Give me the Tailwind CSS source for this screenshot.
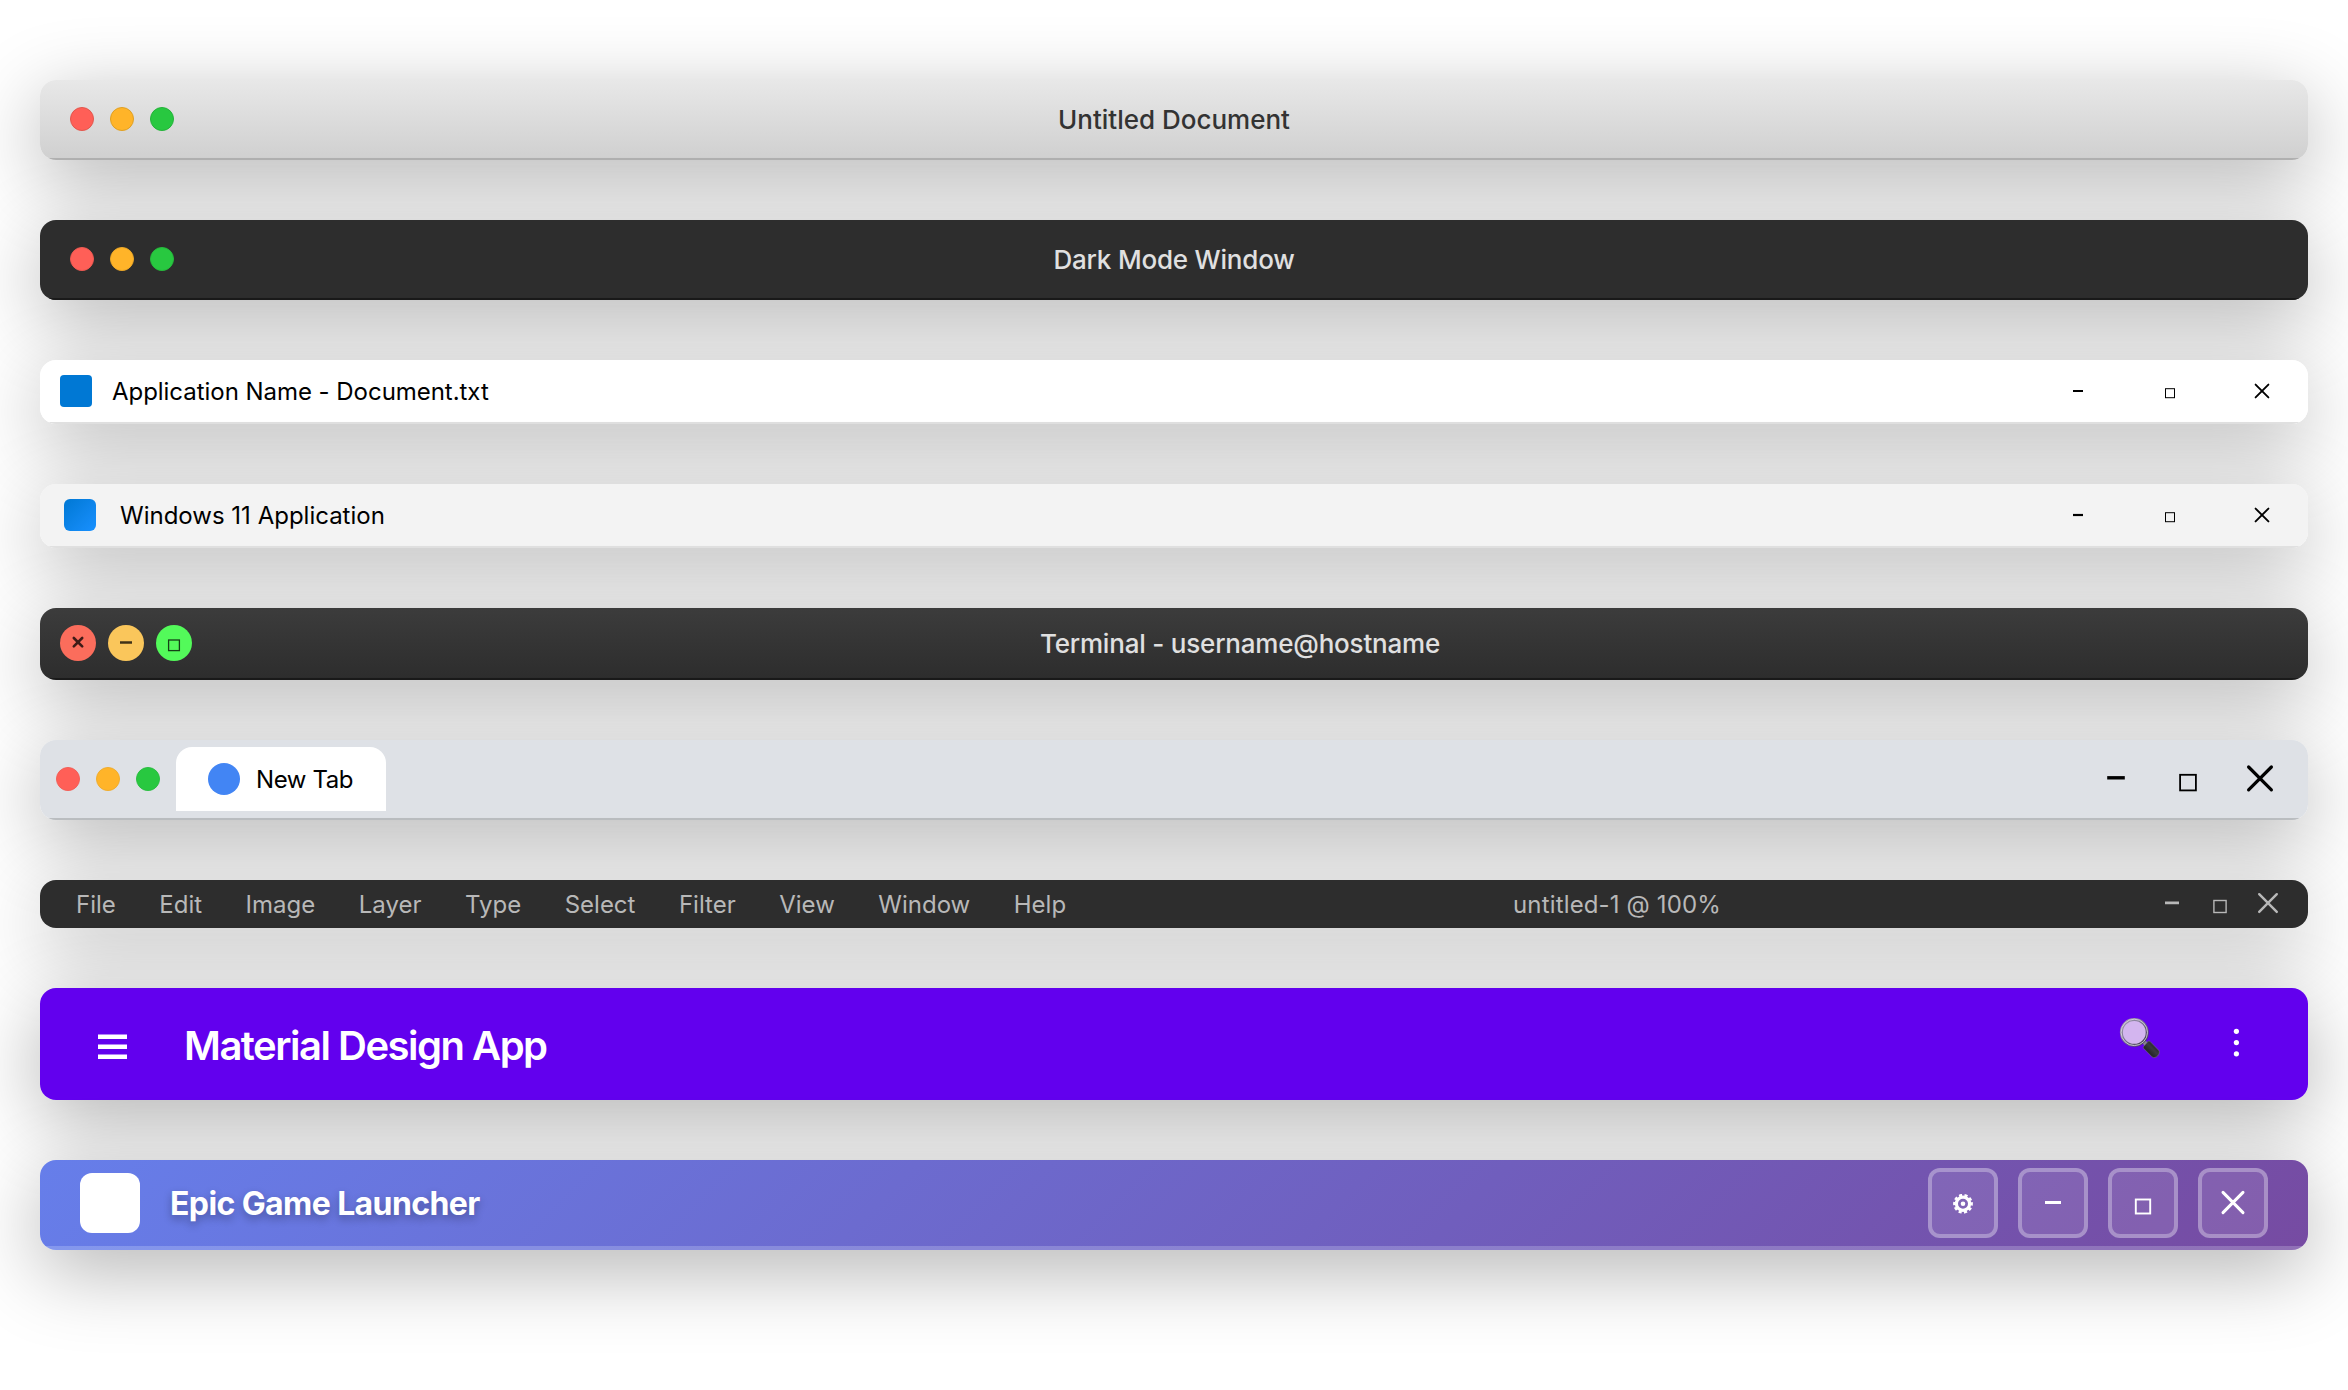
<!DOCTYPE html>
<html lang="en">
<head>
<meta charset="utf-8">
<title>Title bars</title>
<script src="https://cdn.jsdelivr.net/npm/@tailwindcss/browser@4"></script>
</head>
<body class="bg-white font-[Inter,sans-serif]">
<main class="flex min-h-screen flex-col gap-[60px] px-10 py-20">

  <!-- macOS light -->
  <div class="overflow-hidden rounded-2xl shadow-[0_20px_80px_rgba(0,0,0,0.3)]">
  <header class="grid h-20 grid-cols-[1fr_auto_1fr] items-center border-b-2 border-[#b0b0b0] bg-linear-to-b from-[#e8e8e8] to-[#d0d0d0] px-[30px]">
    <div class="flex gap-4">
      <span class="size-6 rounded-full border border-[#e2574d] bg-[#ff5f57]"></span>
      <span class="size-6 rounded-full border border-[#dfa023] bg-[#ffb429]"></span>
      <span class="size-6 rounded-full border border-[#24b33a] bg-[#28c840]"></span>
    </div>
    <h1 class="pt-px text-[26px] font-medium text-[#333]">Untitled Document</h1>
  </header>
  </div>

  <!-- macOS dark -->
  <div class="overflow-hidden rounded-2xl shadow-[0_20px_80px_rgba(0,0,0,0.3)]">
  <header class="grid h-20 grid-cols-[1fr_auto_1fr] items-center border-b-2 border-[#1a1a1a] bg-[#2d2d2d] px-[30px]">
    <div class="flex gap-4">
      <span class="size-6 rounded-full border border-[#ee5a52] bg-[#ff5f57]"></span>
      <span class="size-6 rounded-full border border-[#eda827] bg-[#ffb429]"></span>
      <span class="size-6 rounded-full border border-[#26bb3c] bg-[#28c840]"></span>
    </div>
    <h1 class="pt-px text-[26px] font-medium tracking-[-0.2px] text-[#e0e0e0]">Dark Mode Window</h1>
  </header>
  </div>

  <!-- Windows 10 -->
  <div class="overflow-hidden rounded-2xl shadow-[0_20px_80px_rgba(0,0,0,0.3)]">
  <header class="flex h-16 items-center border-b-2 border-[#e0e0e0] bg-white pl-5">
    <span class="size-8 rounded bg-[#0078d4]"></span>
    <h1 class="ml-5 pt-0.5 text-2xl tracking-[-0.04px] text-black">Application Name - Document.txt</h1>
    <div class="ml-auto flex text-black">
      <button class="flex w-[92px] justify-center"><svg class="size-10" viewBox="-20 -20 40 40"><path d="M-5 0H5" stroke="currentColor" stroke-width="2.2"/></svg></button>
      <button class="flex w-[92px] justify-center"><svg class="size-10" viewBox="-20 -20 40 40"><rect x="-4.5" y="-2.3" width="9" height="9" fill="none" stroke="currentColor" stroke-width="1"/></svg></button>
      <button class="flex w-[92px] justify-center"><svg class="size-10" viewBox="-20 -20 40 40"><path d="M-6.4-6.4 6.4 6.4M6.4-6.4-6.4 6.4" stroke="currentColor" stroke-width="1.9" stroke-linecap="round"/></svg></button>
    </div>
  </header>
  </div>

  <!-- Windows 11 -->
  <div class="overflow-hidden rounded-2xl shadow-[0_20px_80px_rgba(0,0,0,0.3)]">
  <header class="flex h-16 items-center border-b-2 border-[#e0e0e0] bg-[#f3f3f3] pl-6">
    <span class="size-8 rounded-md bg-linear-to-br from-[#0078d4] to-[#1890ff]"></span>
    <h1 class="ml-6 pt-0.5 text-2xl text-black">Windows 11 Application</h1>
    <div class="ml-auto flex text-black">
      <button class="flex w-[92px] justify-center"><svg class="size-10" viewBox="-20 -20 40 40"><path d="M-5 0H5" stroke="currentColor" stroke-width="2.2"/></svg></button>
      <button class="flex w-[92px] justify-center"><svg class="size-10" viewBox="-20 -20 40 40"><rect x="-4.5" y="-2.3" width="9" height="9" fill="none" stroke="currentColor" stroke-width="1"/></svg></button>
      <button class="flex w-[92px] justify-center"><svg class="size-10" viewBox="-20 -20 40 40"><path d="M-6.4-6.4 6.4 6.4M6.4-6.4-6.4 6.4" stroke="currentColor" stroke-width="1.9" stroke-linecap="round"/></svg></button>
    </div>
  </header>
  </div>

  <!-- Terminal -->
  <div class="overflow-hidden rounded-2xl shadow-[0_20px_80px_rgba(0,0,0,0.3)]">
  <header class="flex h-[72px] items-center border-b-2 border-[#1a1a1a] bg-linear-to-b from-[#3c3c3c] to-[#2d2d2d] px-5">
    <div class="flex gap-3 text-black/75">
      <button class="size-9 rounded-full bg-[#fb6d5c]"><svg class="size-9" viewBox="-18 -18 36 36"><path d="M-4.2-5 4.2 3.4M4.2-5-4.2 3.4" stroke="currentColor" stroke-width="2.6" stroke-linecap="round"/></svg></button>
      <button class="size-9 rounded-full bg-[#fac65b]"><svg class="size-9" viewBox="-18 -18 36 36"><path d="M-6-.5H6" stroke="currentColor" stroke-width="2.4"/></svg></button>
      <button class="size-9 rounded-full bg-[#53fa5a]"><svg class="size-9" viewBox="-18 -18 36 36"><rect x="-5.4" y="-3" width="10.8" height="10.6" fill="none" stroke="currentColor" stroke-width="1.3"/></svg></button>
    </div>
    <h1 class="flex-1 pt-px text-center text-[26px] font-medium tracking-[-0.2px] text-[#e0e0e0]">Terminal - username@hostname</h1>
  </header>
  </div>

  <!-- Browser -->
  <div class="overflow-hidden rounded-2xl shadow-[0_20px_80px_rgba(0,0,0,0.3)]">
  <header class="flex h-20 items-center border-b-2 border-[#babdc0] bg-[#dee1e6] pl-4 pr-3">
    <div class="flex gap-4">
      <span class="size-6 rounded-full border border-[#f35f57] bg-[#ff5f57]"></span>
      <span class="size-6 rounded-full border border-[#f0ad2e] bg-[#ffb429]"></span>
      <span class="size-6 rounded-full border border-[#2bbe42] bg-[#28c840]"></span>
    </div>
    <div class="ml-4 flex h-16 w-[210px] items-center gap-4 rounded-t-2xl bg-white pl-8">
      <span class="size-8 rounded-full bg-[#4285f4]"></span>
      <span class="pt-px text-2xl tracking-[-0.4px] text-black">New Tab</span>
    </div>
    <div class="ml-auto flex text-black">
      <button class="flex w-[72px] justify-center"><svg class="size-10" viewBox="-20 -20 40 40"><path d="M-8.8-1.2H8.8" stroke="currentColor" stroke-width="3.4"/></svg></button>
      <button class="flex w-[72px] justify-center"><svg class="size-10" viewBox="-20 -20 40 40"><rect x="-7.9" y="-4.2" width="15.8" height="15.6" fill="none" stroke="currentColor" stroke-width="1.8"/></svg></button>
      <button class="flex w-[72px] justify-center"><svg class="size-10" viewBox="-20 -20 40 40"><path d="M-11.4-12 11.4 10.8M11.4-12-11.4 10.8" stroke="currentColor" stroke-width="3.2" stroke-linecap="round"/></svg></button>
    </div>
  </header>
  </div>

  <!-- Image editor -->
  <div class="overflow-hidden rounded-2xl shadow-[0_20px_80px_rgba(0,0,0,0.3)]">
  <header class="flex h-12 items-center bg-[#2d2d2d] pl-9 pr-6 text-2xl text-[#b8b8b8]">
    <nav class="flex gap-[43.5px] pr-3 pt-0.5">
      <span>File</span><span>Edit</span><span>Image</span><span>Layer</span><span>Type</span><span>Select</span><span>Filter</span><span>View</span><span>Window</span><span>Help</span>
    </nav>
    <span class="flex-1 pt-0.5 text-center tracking-[0.15px]">untitled-1 @ 100%</span>
    <div class="flex gap-4">
      <button><svg class="size-8" viewBox="-16 -16 32 32"><path d="M-7-1.1H7" stroke="currentColor" stroke-width="2.8"/></svg></button>
      <button><svg class="size-8" viewBox="-16 -16 32 32"><rect x="-6.1" y="-3.5" width="12.2" height="12" fill="none" stroke="currentColor" stroke-width="1.4"/></svg></button>
      <button><svg class="size-8" viewBox="-16 -16 32 32"><path d="M-8.8-9.8 8.8 7.9M8.8-9.8-8.8 7.9" stroke="currentColor" stroke-width="2.4" stroke-linecap="round"/></svg></button>
    </div>
  </header>
  </div>

  <!-- Material -->
  <div class="overflow-hidden rounded-2xl shadow-[0_20px_80px_rgba(0,0,0,0.3)]">
  <header class="flex h-28 items-center bg-[#6200ee] px-12 text-white">
    <button><svg class="size-12" viewBox="-24 -24 48 48"><path d="M-14-7.3H15M-14 2.7H15M-14 12.7H15" stroke="currentColor" stroke-width="4.6"/></svg></button>
    <h1 class="ml-12 pt-[3px] text-[40px] font-semibold tracking-[-1.5px]">Material Design App</h1>
    <div class="ml-auto flex items-center gap-12">
      <button><svg class="size-12" viewBox="2116 1020 48 48" overflow="visible">
        <defs>
          <linearGradient id="rim" x1="0" y1="0" x2="1" y2="1"><stop offset="0" stop-color="#a9a0b8"/><stop offset=".5" stop-color="#77708a"/><stop offset="1" stop-color="#3c3748"/></linearGradient>
          <linearGradient id="grip" x1="0" y1="1" x2="1" y2="0"><stop offset="0" stop-color="#050507"/><stop offset=".55" stop-color="#3a3a40"/><stop offset="1" stop-color="#0b0b0e"/></linearGradient>
        </defs>
        <path d="M2143 1041 2147 1045" stroke="#8a8496" stroke-width="4"/>
        <path d="m2143.800 1046.200 4-4.600c.7-.7 1.600-.7 2.400 0l8.400 8.600c1.600 1.700.5 4.200-1 5.700s-4 2.500-5.500 1l-8.300-8.300c-.8-.8-.7-1.700 0-2.400z" fill="url(#grip)" stroke="#77718a" stroke-width=".6"/>
        <circle cx="2134.300" cy="1032.400" r="12.900" fill="#d3b5ef" stroke="url(#rim)" stroke-width="3"/>
        <circle cx="2134.300" cy="1032.400" r="13.200" fill="none" stroke="#e3dcec" stroke-width=".8"/>
      </svg></button>
      <button><svg class="size-12" viewBox="-24 -24 48 48"><g fill="currentColor"><circle cx=".4" cy="-12.700" r="2.600"/><circle cx=".4" cy="-1.400" r="2.600"/><circle cx=".4" cy="9.800" r="2.600"/></g></svg></button>
    </div>
  </header>
  </div>

  <!-- Game launcher -->
  <div class="overflow-hidden rounded-2xl shadow-[0_20px_80px_rgba(0,0,0,0.3)]">
  <header class="flex h-[90px] items-center border-b-4 border-white/20 bg-linear-[135deg] from-[#667eea] to-[#764ba2] px-10 text-white">
    <span class="size-[60px] rounded-xl bg-white"></span>
    <h1 class="ml-[30px] pt-px text-[32px] font-bold tracking-[-0.6px] [text-shadow:0_4px_8px_rgba(0,0,0,0.3)]">Epic Game Launcher</h1>
    <div class="ml-auto flex gap-5">
      <button class="flex size-[70px] items-center justify-center rounded-xl border-4 border-white/30 bg-white/10"><svg class="size-10" viewBox="-20 -20 40 40"><g transform="translate(0 .8)"><circle r="6.600" fill="none" stroke="currentColor" stroke-width="3.200"/><circle r="8.600" fill="none" stroke="currentColor" stroke-width="2.600" stroke-dasharray="3.100 2.304" transform="rotate(-10)"/><circle r="2.300" fill="currentColor"/></g></svg></button>
      <button class="flex size-[70px] items-center justify-center rounded-xl border-4 border-white/30 bg-white/10"><svg class="size-10" viewBox="-20 -20 40 40"><path d="M-8-.5H8" stroke="currentColor" stroke-width="3"/></svg></button>
      <button class="flex size-[70px] items-center justify-center rounded-xl border-4 border-white/30 bg-white/10"><svg class="size-10" viewBox="-20 -20 40 40"><rect x="-7.200" y="-3.500" width="14.400" height="14" fill="none" stroke="currentColor" stroke-width="1.900"/></svg></button>
      <button class="flex size-[70px] items-center justify-center rounded-xl border-4 border-white/30 bg-white/10"><svg class="size-10" viewBox="-20 -20 40 40"><path d="M-10-10.600 10 9.600M10-10.600-10 9.600" stroke="currentColor" stroke-width="3" stroke-linecap="round"/></svg></button>
    </div>
  </header>
  </div>
</main>
</body>
</html>
